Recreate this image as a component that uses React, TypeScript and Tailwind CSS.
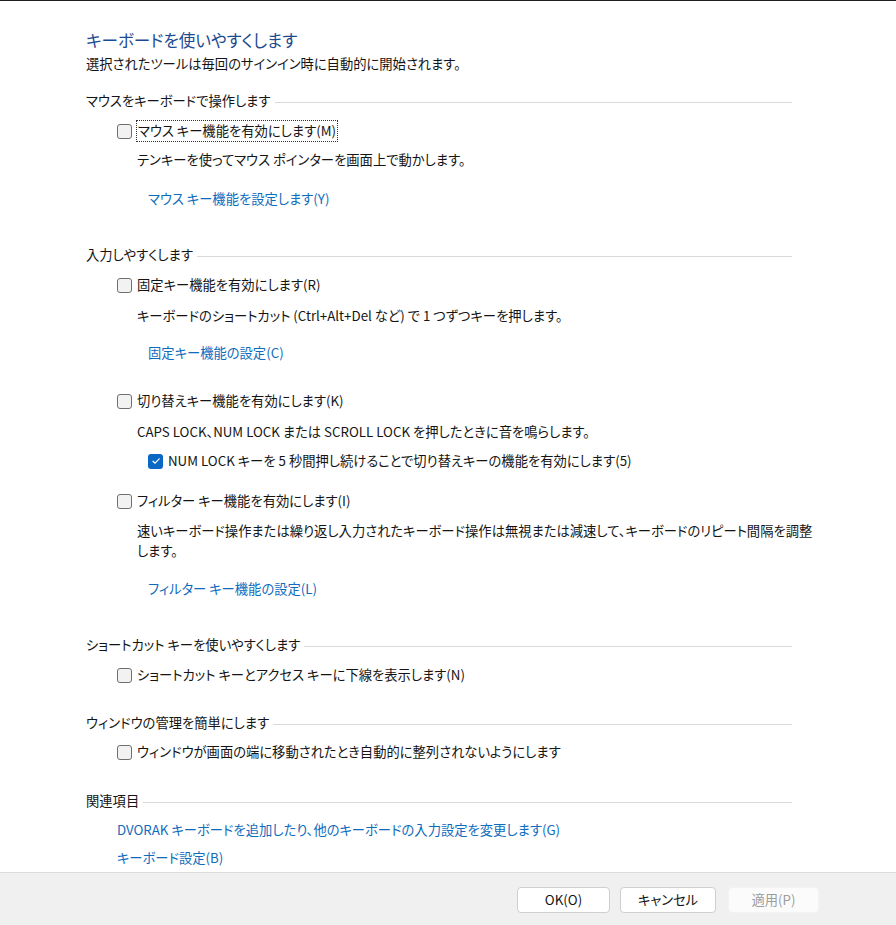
import React from "react";

const font = "font-['Noto_Sans_CJK_JP','Noto_Sans',sans-serif] [font-feature-settings:'palt']";

function Box({ checked = false }: { checked?: boolean }) {
  if (checked) {
    return (
      <span className="inline-flex h-[15px] w-[15px] shrink-0 items-center justify-center rounded-[3px] bg-[#0b67c4]">
        <svg width="10" height="10" viewBox="0 0 10 10" fill="none">
          <path d="M2 5.2 L4.1 7.2 L8.2 2.8" stroke="white" strokeWidth="1.2" strokeLinecap="round" strokeLinejoin="round" />
        </svg>
      </span>
    );
  }
  return (
    <span className="inline-block h-[15px] w-[15px] shrink-0 rounded-[3px] border border-[#6f6f6f] bg-[#f2f2f2]" />
  );
}

function Check({ label, checked, focus, className = "" }: { label: string; checked?: boolean; focus?: boolean; className?: string }) {
  return (
    <div className={`flex h-[20px] items-center gap-[5px] ${className}`}>
      <Box checked={checked} />
      <span className={focus ? "px-[1px] leading-[20px] outline outline-1 outline-dotted outline-[#333]" : "leading-[20px]"}>{label}</span>
    </div>
  );
}

function Section({ title, className = "" }: { title: string; className?: string }) {
  return (
    <div className={`flex h-[20px] items-center pr-[104px] ${className}`}>
      <span className="leading-[20px]">{title}</span>
      <div className="ml-[4px] mt-[2px] h-px flex-1 bg-[#d9d9d9]" />
    </div>
  );
}

export default function App() {
  return (
    <div className={`flex h-[925px] w-[896px] flex-col border-t border-[#1f1f1f] bg-white text-[13.3px] text-[#141414] ${font}`}>
      <div className="flex-1 pl-[86px]">
        <div className="mt-[28px] h-[22px] text-[16.6px] leading-[22px] text-[#1d4b8f]">キーボードを使いやすくします</div>
        <div className="mt-[3px] leading-[20px]">選択されたツールは毎回のサインイン時に自動的に開始されます。</div>

        <Section title="マウスをキーボードで操作します" className="mt-[17px]" />
        <div className="pl-[31px]">
          <Check label="マウス キー機能を有効にします(M)" focus className="mt-[10px]" />
          <div className="mt-[9px] pl-[20px] leading-[20px]">テンキーを使ってマウス ポインターを画面上で動かします。</div>
          <div className="mt-[19px] pl-[31px] leading-[20px] text-[#0f6cbd]">マウス キー機能を設定します(Y)</div>
        </div>

        <Section title="入力しやすくします" className="mt-[36px]" />
        <div className="pl-[31px]">
          <Check label="固定キー機能を有効にします(R)" className="mt-[10px]" />
          <div className="mt-[11px] pl-[20px] leading-[20px]">キーボードのショートカット (Ctrl+Alt+Del など) で 1 つずつキーを押します。</div>
          <div className="mt-[17px] pl-[31px] leading-[20px] text-[#0f6cbd]">固定キー機能の設定(C)</div>

          <Check label="切り替えキー機能を有効にします(K)" className="mt-[28px]" />
          <div className="mt-[11px] pl-[20px] leading-[20px]">CAPS LOCK、NUM LOCK または SCROLL LOCK を押したときに音を鳴らします。</div>
          <Check label="NUM LOCK キーを 5 秒間押し続けることで切り替えキーの機能を有効にします(5)" checked className="mt-[9px] pl-[31px]" />

          <Check label="フィルター キー機能を有効にします(I)" className="mt-[20px]" />
          <div className="mt-[10px] whitespace-nowrap pl-[20px] leading-[20px]">
            速いキーボード操作または繰り返し入力されたキーボード操作は無視または減速して、キーボードのリピート間隔を調整
            <br />
            します。
          </div>
          <div className="mt-[18px] pl-[31px] leading-[20px] text-[#0f6cbd]">フィルター キー機能の設定(L)</div>
        </div>

        <Section title="ショートカット キーを使いやすくします" className="mt-[36px]" />
        <div className="pl-[31px]">
          <Check label="ショートカット キーとアクセス キーに下線を表示します(N)" className="mt-[10px]" />
        </div>

        <Section title="ウィンドウの管理を簡単にします" className="mt-[28px]" />
        <div className="pl-[31px]">
          <Check label="ウィンドウが画面の端に移動されたとき自動的に整列されないようにします" className="mt-[9px]" />
        </div>

        <Section title="関連項目" className="mt-[29px]" />
        <div className="pl-[31px] text-[#0f6cbd]">
          <div className="mt-[9px] leading-[20px]">DVORAK キーボードを追加したり、他のキーボードの入力設定を変更します(G)</div>
          <div className="mt-[8px] leading-[20px]">キーボード設定(B)</div>
        </div>
      </div>

      <div className="flex h-[53px] items-start justify-end border-t border-[#dcdcdc] bg-[#f0f0f0] pr-[77px] pt-[14px]">
        <button className="h-[26px] w-[93px] rounded-[4px] border border-[#cfcfcf] bg-white text-[13.3px] text-[#141414]">OK(O)</button>
        <button className="ml-[10px] h-[26px] w-[96px] rounded-[4px] border border-[#cfcfcf] bg-white text-[13.3px] text-[#141414]">キャンセル</button>
        <button className="ml-[12px] h-[26px] w-[91px] rounded-[4px] border border-[#f3f3f3] bg-[#fbfbfb] text-[13.3px] text-[#9d9d9d]">適用(P)</button>
      </div>
    </div>
  );
}
